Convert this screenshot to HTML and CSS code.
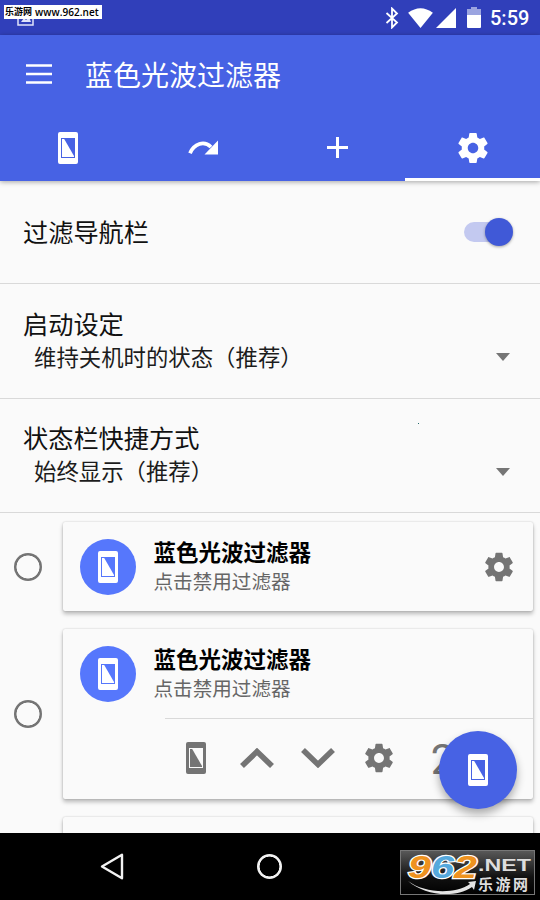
FILE: index.html
```
<!DOCTYPE html>
<html lang="zh-CN">
<head>
<meta charset="utf-8">
<title>蓝色光波过滤器</title>
<link rel="stylesheet" href="styles.css">
</head>
<body>
<svg class="defs" aria-hidden="true">
  <symbol id="phone" viewBox="0 0 20 32"><path fill="currentColor" fill-rule="evenodd" d="M2 0H18Q20 0 20 2V30Q20 32 18 32H2Q0 32 0 30V2Q0 0 2 0ZM3 6V26H17V6Z"/><path fill="currentColor" d="M4 7H6.2L16 24V25H4Z"/></symbol>
  <symbol id="gear" viewBox="0 0 24 24"><path fill="currentColor" d="M19.43 12.98c.04-.32.07-.64.07-.98s-.03-.66-.07-.98l2.11-1.65c.19-.15.24-.42.12-.64l-2-3.46c-.12-.22-.39-.3-.61-.22l-2.49 1c-.52-.4-1.08-.73-1.69-.98l-.38-2.65C14.46 2.18 14.25 2 14 2h-4c-.25 0-.46.18-.49.42l-.38 2.65c-.61.25-1.17.59-1.69.98l-2.49-1c-.23-.09-.49 0-.61.22l-2 3.46c-.13.22-.07.49.12.64l2.11 1.65c-.04.32-.07.65-.07.98s.03.66.07.98l-2.11 1.65c-.19.15-.24.42-.12.64l2 3.46c.12.22.39.3.61.22l2.49-1c.52.4 1.08.73 1.69.98l.38 2.65c.03.24.24.42.49.42h4c.25 0 .46-.18.49-.42l.38-2.65c.61-.25 1.17-.59 1.69-.98l2.49 1c.23.09.49 0 .61-.22l2-3.46c.12-.22.07-.49-.12-.64l-2.11-1.65zM12 15.5c-1.93 0-3.5-1.57-3.5-3.5s1.57-3.5 3.5-3.5 3.5 1.57 3.5 3.5-1.57 3.5-3.5 3.5z"/></symbol>
</svg>
<div class="screen">
  <header class="status">
    <svg class="notif" viewBox="0 0 17 17"><rect x="1" y="1" width="15" height="15" fill="none" stroke="#dfe3fa" stroke-width="1.5"/><path d="M4 13L7 9L9 11L12 8L14 13Z" fill="#dfe3fa"/></svg>
    <div class="site-tag"><span class="tag-cn">乐游网</span><span class="tag-url">www.962.net</span></div>
    <svg class="bt" viewBox="0 0 14 22"><path d="M1.5 6L12 15.5L7 20.5V1.5L12 6.5L1.5 16" fill="none" stroke="#fff" stroke-width="1.8"/></svg>
    <svg class="wifi" viewBox="0 0 26 21"><path d="M0 5Q13-4.5 26 5L13 21Z" fill="#fff"/></svg>
    <svg class="signal" viewBox="0 0 20 20"><path d="M20 0V20H0Z" fill="#fff"/></svg>
    <svg class="battery" viewBox="0 0 14 21"><path d="M4 0H10V2H14V8H0V2H4Z" fill="#9ba4e0"/><path d="M0 8H14V20Q14 21 13 21H1Q0 21 0 20Z" fill="#fff"/></svg>
    <span class="clock">5:59</span>
  </header>
  <div class="appbar">
    <div class="toolbar">
      <svg class="menu" viewBox="0 0 26 20"><path d="M0 1.5H26M0 10H26M0 18.5H26" stroke="#fff" stroke-width="2.6"/></svg>
      <h1 class="title">蓝色光波过滤器</h1>
    </div>
    <nav class="tabs">
      <div class="tab"><svg class="i-phone"><use href="#phone"/></svg></div>
      <div class="tab"><svg class="i-redo" viewBox="0 0 30 15"><path d="M2 13.2C6 3.8 16 .2 23 7" fill="none" stroke="#fff" stroke-width="3.8"/><path d="M30 .5V14.5H16.5Z" fill="#fff"/></svg></div>
      <div class="tab"><svg class="i-plus" viewBox="0 0 21 21"><path d="M10.5 0V21M0 10.5H21" stroke="#fff" stroke-width="3"/></svg></div>
      <div class="tab active"><svg class="i-gear-tab"><use href="#gear"/></svg></div>
    </nav>
  </div>
  <main class="content">
    <section class="row row-switch">
      <div class="label">过滤导航栏</div>
      <div class="switch"><span class="thumb"></span></div>
    </section>
    <section class="row row-select">
      <div class="texts"><div class="label">启动设定</div><div class="value">维持关机时的状态（推荐）</div></div>
      <span class="caret"></span>
    </section>
    <section class="row row-select">
      <div class="texts"><div class="label">状态栏快捷方式</div><div class="value">始终显示（推荐）</div></div>
      <span class="caret"></span>
      <span class="speck"></span>
    </section>
    <section class="options">
      <div class="option">
        <span class="radio"></span>
        <div class="card">
          <div class="card-head">
            <div class="avatar"><svg class="i-phone"><use href="#phone"/></svg></div>
            <div class="card-text"><div class="card-title">蓝色光波过滤器</div><div class="card-sub">点击禁用过滤器</div></div>
            <svg class="i-gear"><use href="#gear"/></svg>
          </div>
        </div>
      </div>
      <div class="option">
        <span class="radio"></span>
        <div class="card">
          <div class="card-head">
            <div class="avatar"><svg class="i-phone"><use href="#phone"/></svg></div>
            <div class="card-text"><div class="card-title">蓝色光波过滤器</div><div class="card-sub">点击禁用过滤器</div></div>
          </div>
          <div class="actions">
            <div class="action"><svg class="i-phone"><use href="#phone"/></svg></div>
            <div class="action"><svg class="i-chev" viewBox="0 0 34 20"><path d="M2 18L17 3.6L32 18" fill="none" stroke="currentColor" stroke-width="5.6"/></svg></div>
            <div class="action"><svg class="i-chev" viewBox="0 0 34 20"><path d="M2 2L17 16.4L32 2" fill="none" stroke="currentColor" stroke-width="5.6"/></svg></div>
            <div class="action"><svg class="i-gear"><use href="#gear"/></svg></div>
            <div class="action count">2</div>
          </div>
        </div>
      </div>
      <div class="option"><div class="card card-next"></div></div>
    </section>
    <button class="fab" type="button"><svg class="i-phone"><use href="#phone"/></svg></button>
  </main>
  <footer class="navbar">
    <svg class="back" viewBox="0 0 24 27"><path d="M22 1.8V25.2L2 13.5Z" fill="none" stroke="#f2f2f2" stroke-width="2.4" stroke-linejoin="round"/></svg>
    <span class="home"></span>
    <div class="logo">
      <svg class="logo-art" viewBox="0 0 135 45">
        <path d="M8 31C24 43 54 45 70 34L68 32L76 31L74 40L72 37C54 49 24 45 8 31Z" fill="#e4e4e4"/>
        <g class="logo-num"><text x="8" y="27.5" textLength="23" lengthAdjust="spacingAndGlyphs" fill="#ee9220">9</text><text x="31" y="27.5" textLength="23" lengthAdjust="spacingAndGlyphs" fill="#55a8dc">6</text><text x="54" y="27.5" textLength="23" lengthAdjust="spacingAndGlyphs" fill="#ee9220">2</text></g>
        <text class="logo-net" x="78" y="21" textLength="53" lengthAdjust="spacingAndGlyphs">.NET</text>
        <text class="logo-cn" x="78" y="40" textLength="50">乐游网</text>
      </svg>
    </div>
  </footer>
</div>
</body>
</html>
```
FILE: styles.css
```
* { box-sizing: border-box; }
body { margin: 0; font-family: Roboto, "Noto Sans CJK SC", sans-serif; color: #111; }
svg { display: block; flex: none; }
.defs { position: absolute; width: 0; height: 0; }
.screen { width: 540px; height: 900px; overflow: hidden; display: flex; flex-direction: column; background: #fafafa; }

.status { position: relative; height: 35px; flex: none; background: #303fba; color: #fff; display: flex; align-items: center; padding: 0 12px 0 385px; }
.notif { position: absolute; left: 17px; top: 9px; width: 17px; height: 17px; }
.site-tag { position: absolute; left: 4px; top: 5px; width: 98px; height: 14px; background: #fff; color: #000; display: flex; align-items: center; gap: 3px; padding-left: 1px; white-space: nowrap; line-height: 14px; font-weight: 700; }
.tag-cn { font-size: 9px; line-height: 14px; }
.tag-url { font: 600 10px/14px "Open Sans", "Noto Sans", sans-serif; letter-spacing: .05px; }
.bt { width: 14px; height: 22px; }
.wifi { width: 25px; height: 20px; margin-left: 9px; }
.signal { width: 20px; height: 20px; margin-left: 3px; }
.battery { width: 14px; height: 21px; margin-left: 11px; }
.clock { margin-left: 9px; font-size: 20px; font-weight: 500; line-height: 35px; padding-top: 2px; }

.appbar { position: relative; z-index: 1; flex: none; height: 146px; background: #4762e4; box-shadow: 0 1px 5px rgba(0,0,0,.35); color: #fff; }
.toolbar { height: 78px; display: flex; align-items: center; padding: 0 26px; }
.menu { width: 26px; height: 20px; }
.title { margin: 0 0 0 33px; font-size: 28px; font-weight: 400; line-height: 40px; padding-top: 5px; }
.tabs { height: 68px; display: grid; grid-template-columns: repeat(4, 1fr); }
.tab { display: flex; align-items: center; justify-content: center; border-bottom: 3px solid transparent; padding-top: 4px; }
.tab.active { border-bottom-color: #fff; }
.i-phone { width: 20px; height: 32px; }
.i-redo { width: 30px; height: 15px; }
.i-plus { width: 21px; height: 21px; }
.i-gear-tab { width: 36px; height: 36px; }

.content { position: relative; flex: 1; min-height: 0; overflow: hidden; }
.row { position: relative; display: flex; justify-content: space-between; border-bottom: 1px solid #d9d9d9; padding: 0 30px 0 23px; }
.label { font-size: 25.2px; line-height: 33px; }
.row-switch { height: 103px; align-items: center; padding: 0 27px 0 23px; }
.row-switch .label { padding-top: 2px; }
.switch { width: 49px; height: 20px; border-radius: 10px 0 0 10px; background: linear-gradient(to right, #c3c9f0 36px, transparent 36px); display: flex; align-items: center; justify-content: flex-end; }
.thumb { width: 28px; height: 28px; flex: none; border-radius: 50%; background: #4059d7; box-shadow: 0 1px 3px rgba(0,0,0,.35); }
.row-select { height: 115px; padding-top: 25px; }
.row-select + .row-select { height: 114px; padding-top: 24px; }
.row-select + .row-select .caret { margin-top: 45px; }
.value { font-size: 22.4px; line-height: 33px; padding-left: 11px; color: #1c1c1c; }
.caret { border: 7px solid transparent; border-top: 8px solid #757575; border-bottom: 0; height: 8px; margin-top: 44px; }
.speck { position: absolute; left: 418px; top: 24px; width: 1px; height: 1px; background: #246a6a; }

.options { display: flex; flex-direction: column; gap: 18px; padding-top: 9px; }
.option { display: flex; align-items: center; justify-content: flex-end; padding-right: 7px; }
.radio { width: 28px; height: 28px; margin-right: 21px; flex: none; border-radius: 50%; background: radial-gradient(circle closest-side, transparent 11.2px, #747474 11.8px); }
.card { width: 470px; flex: none; background: #fafafa; border-radius: 2px; box-shadow: 0 0 2px rgba(0,0,0,.2), 0 3px 4px rgba(0,0,0,.26); }
.card-head { height: 89px; display: flex; align-items: center; padding: 0 17px; }
.avatar { width: 56px; height: 56px; border-radius: 50%; background: #5677fc; color: #fff; display: flex; align-items: center; justify-content: center; }
.card-text { flex: 1; margin-left: 17.5px; padding-top: 3px; }
.card-title { font-size: 22.5px; font-weight: 700; line-height: 29px; color: #000; }
.card-sub { font-size: 19.6px; line-height: 29px; color: #666; }
.i-gear { width: 34px; height: 34px; color: #747474; }
.actions { height: 81px; margin-left: 102px; border-top: 1px solid #d9d9d9; display: grid; grid-template-columns: repeat(5, 61px); align-items: center; padding-bottom: 2px; color: #747474; }
.action { display: flex; justify-content: center; }
.i-chev { width: 34px; height: 20px; }
.count { font-size: 42px; line-height: 42px; padding: 4px 0 0 6px; }
.card-next { height: 60px; }
.fab { position: absolute; left: 439px; top: 550px; width: 78px; height: 78px; border: 0; border-radius: 50%; padding: 0; background: #4762e4; color: #fff; display: flex; align-items: center; justify-content: center; box-shadow: 0 5px 9px rgba(0,0,0,.32); }

.navbar { height: 67px; flex: none; background: #000; display: flex; align-items: center; padding-left: 100px; }
.back { width: 24px; height: 27px; }
.home { width: 25px; height: 25px; margin-left: 133px; border-radius: 50%; background: radial-gradient(circle closest-side, transparent 9.6px, #f2f2f2 10.2px); }
.logo { width: 135px; height: 45px; margin: 11px 0 0 118px; background: linear-gradient(#5b5b5b, #111 60%, #000); box-shadow: inset 0 0 0 1px #777; flex: none; }
.logo-art { width: 135px; height: 45px; overflow: visible; }
.logo-num { font: italic 700 32px "Liberation Sans", sans-serif; stroke: #fff; stroke-width: 2.4px; paint-order: stroke; }
.logo-net { font: 700 17px "Liberation Sans", sans-serif; fill: #ddd; }
.logo-cn { font: 700 15px "Noto Sans CJK SC", sans-serif; fill: #ddd; }
```
